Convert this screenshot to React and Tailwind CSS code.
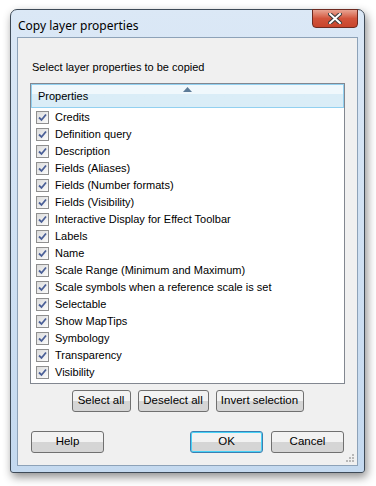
import { useState } from "react";

const PROPS = [
  "Credits",
  "Definition query",
  "Description",
  "Fields (Aliases)",
  "Fields (Number formats)",
  "Fields (Visibility)",
  "Interactive Display for Effect Toolbar",
  "Labels",
  "Name",
  "Scale Range (Minimum and Maximum)",
  "Scale symbols when a reference scale is set",
  "Selectable",
  "Show MapTips",
  "Symbology",
  "Transparency",
  "Visibility",
];

const CheckBox = ({ checked }) => (
  <span className="w-[13px] h-[13px] border border-[#8f8f8f] bg-gradient-to-br from-[#dcdcdc] to-[#fbfbfb] flex items-center justify-center shrink-0">
    {checked && (
      <svg width="9" height="9" viewBox="0 0 9 9">
        <path d="M1 4.5 L3.5 7 L8 1.5" stroke="#4a5f97" strokeWidth="1.8" fill="none" />
      </svg>
    )}
  </span>
);

const WinButton = ({ children, className = "", focused = false }) => (
  <button
    type="button"
    className={
      "h-[22px] rounded-[3px] border text-[11.5px] text-black bg-gradient-to-b from-[#f2f2f2] from-50% to-[#d5d5d5] to-50% " +
      (focused ? "border-[#3c7fb1] shadow-[inset_0_0_0_1px_#48d2f7] " : "border-[#707070] ") +
      className
    }
  >
    {children}
  </button>
);

// little dotted resize grip in the bottom right corner
const Grip = () => (
  <svg width="10" height="10" viewBox="0 0 10 10">
    {[
      [8, 2],
      [8, 5],
      [5, 5],
      [8, 8],
      [5, 8],
      [2, 8],
    ].map(([x, y]) => (
      <rect key={`${x}-${y}`} x={x - 1} y={y - 1} width="2" height="2" fill="#b8b8b8" />
    ))}
  </svg>
);

export default function App() {
  const [checked, setChecked] = useState(PROPS.map(() => true));

  const toggle = (i) => setChecked((c) => c.map((v, j) => (j === i ? !v : v)));

  return (
    <div className="w-[376px] h-[486px] bg-white pt-[9px] pl-[10px]" style={{ fontFamily: "'Liberation Sans', Arial, sans-serif" }}>
      <div className="w-[355px] h-[464px] rounded-t-[7px] rounded-b-[3px] border border-[#3e4a57] bg-gradient-to-b from-[#dbe8f6] to-[#c4d9ef] shadow-[2px_4px_10px_rgba(0,0,0,0.45)] flex flex-col px-[6px] pb-[6px]">
        <div className="h-[27px] flex items-start justify-between">
          <span className="pt-[7px] pl-[1px] text-[12px] text-black" style={{ fontFamily: "'Noto Sans', 'Open Sans', sans-serif" }}>
            Copy layer properties
          </span>
          <div className="w-[46px] h-[19px] mt-[-1px] rounded-b-[4px] border border-[#6d2a20] bg-gradient-to-b from-[#e8a493] via-[#d2543c] to-[#c8452c] flex items-center justify-center">
            <svg width="14" height="11" viewBox="0 0 14 11">
              <path d="M2 1 L12 10 M12 1 L2 10" stroke="#3b3b3b" strokeWidth="4" strokeLinecap="square" />
              <path d="M2 1 L12 10 M12 1 L2 10" stroke="#ffffff" strokeWidth="2" strokeLinecap="square" />
            </svg>
          </div>
        </div>

        <div className="flex-1 border border-[#8da2b8] bg-[#f0f0f0] flex flex-col text-[11px] text-black">
          <div className="pt-[21px] pl-[14px] h-[45px]">Select layer properties to be copied</div>

          <div className="mx-[12px] h-[301px] border border-[#828790] bg-white flex flex-col">
            <div className="relative h-[24px] border border-[#92d0f0] bg-gradient-to-b from-[#f0f8fc] from-40% to-[#daedf7] to-40% flex items-end pl-[6px] pb-[3px]">
              <span>Properties</span>
              <svg className="absolute left-[151px] top-[2px]" width="9" height="5" viewBox="0 0 9 5">
                <path d="M4.5 0 L9 5 L0 5 Z" fill="#5c7b98" />
              </svg>
            </div>
            <div className="flex flex-col pt-[1px]">
              {PROPS.map((p, i) => (
                <label key={p} className="h-[17px] flex items-center gap-[6px] pl-[5px] cursor-pointer" onClick={() => toggle(i)}>
                  <CheckBox checked={checked[i]} />
                  <span>{p}</span>
                </label>
              ))}
            </div>
          </div>

          <div className="flex justify-center gap-[7px] mt-[6px]">
            <WinButton className="w-[59px]">Select all</WinButton>
            <WinButton className="w-[71px]">Deselect all</WinButton>
            <WinButton className="w-[88px]">Invert selection</WinButton>
          </div>

          <div className="flex items-center mt-[19px] px-[13px]">
            <WinButton className="w-[73px]">Help</WinButton>
            <div className="flex-1" />
            <WinButton focused className="w-[73px]">OK</WinButton>
            <WinButton className="w-[73px] ml-[8px]">Cancel</WinButton>
          </div>

          <div className="mt-auto flex justify-end pr-[2px] pb-[2px]">
            <Grip />
          </div>
        </div>
      </div>
    </div>
  );
}
